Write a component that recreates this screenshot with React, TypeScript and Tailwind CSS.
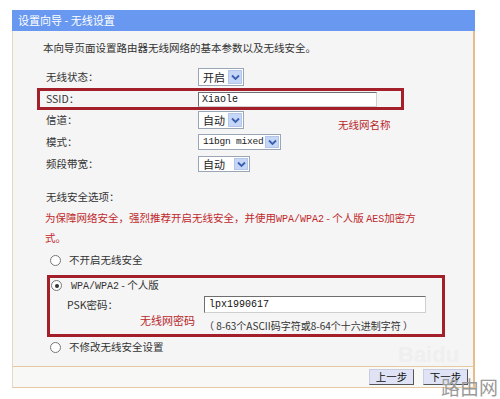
import React from 'react';

const cjk = "font-['SimSun','Noto_Sans_CJK_SC',sans-serif]";
const mono = "font-['Liberation_Mono',monospace]";

function Chevron() {
  return (
    <svg width="9" height="7" viewBox="0 0 9 7">
      <path d="M1 1.5 L4.5 5 L8 1.5" fill="none" stroke="#3a5fb0" strokeWidth="1.8" />
    </svg>
  );
}

function Select({ label, width, mono: isMono }: { label: string; width: number; mono?: boolean }) {
  return (
    <div
      className="flex h-full items-stretch border border-[#9aa6b6] bg-white"
      style={{ width }}>
      <span
        className={`flex-1 flex items-center pl-[4px] whitespace-nowrap overflow-hidden text-[#222] ${
          isMono ? `${mono} text-[9.5px] tracking-[-0.2px]` : `${cjk} text-[11px]`
        }`}>
        {label}
      </span>
      <span className="my-[1px] mr-[1px] w-[14px] shrink-0 flex items-center justify-center bg-[#c6d6f6] border border-[#b3c5ea]">
        <Chevron />
      </span>
    </div>
  );
}

function Radio({ checked }: { checked?: boolean }) {
  return (
    <span className="w-[11px] h-[11px] rounded-full border border-[#777] bg-white flex items-center justify-center">
      {checked && <span className="w-[4px] h-[4px] rounded-full bg-[#333]" />}
    </span>
  );
}

function Row({ label, children, className = '' }: { label: string; children?: React.ReactNode; className?: string }) {
  return (
    <div className={`flex items-center ${className}`}>
      <span className="w-[152px] text-[#333]">{label}</span>
      {children}
    </div>
  );
}

export default function App() {
  return (
    <div className={`relative w-[500px] h-[399px] bg-white overflow-hidden ${cjk} text-[10.5px]`}>
      <div className="ml-[12px] pt-[10px] w-[463px]">
        <div className="h-[21px] bg-[#6898ef] flex items-center pl-[6px] text-white text-[11px]">
          设置向导 - 无线设置
        </div>

        <div className="h-[335px] bg-[#f5f5f5] border-l border-l-[#e6d9c4] border-r-2 border-r-[#e6bd8a] pl-[24px] flex flex-col">
          <div className="mt-[8px] h-[18px] pl-[6px] flex items-center text-[#333]">
            本向导页面设置路由器无线网络的基本参数以及无线安全。
          </div>

          <Row label="无线状态：" className="mt-[11px] h-[18px] pl-[9px]">
            <div className="h-[18px]">
              <Select label="开启" width={46} />
            </div>
          </Row>

          <div className="mt-[2px] h-[22px] w-[367px] border-[3px] border-[#a3202b] pl-[6px] flex items-center">
            <span className="w-[152px] text-[#333]">SSID：</span>
            <div className="h-[15px] w-[179px] bg-white border border-[#6e6e6e] border-r-[#cfcfcf] border-b-[#cfcfcf] flex items-center pl-[3px]">
              <span className={`${mono} text-[10px] text-[#111]`}>Xiaole</span>
            </div>
          </div>

          <Row label="信道：" className="mt-[1px] h-[18px] pl-[9px]">
            <div className="h-[18px]">
              <Select label="自动" width={46} />
            </div>
            <span className="ml-[94px] mt-[9px] text-[#b8282c] text-[10.5px]">无线网名称</span>
          </Row>

          <Row label="模式：" className="mt-[5px] h-[16px] pl-[9px]">
            <div className="h-[16px]">
              <Select label="11bgn mixed" width={83} mono />
            </div>
          </Row>

          <Row label="频段带宽：" className="mt-[6px] h-[16px] pl-[9px]">
            <div className="h-[16px]">
              <Select label="自动" width={52} />
            </div>
          </Row>

          <div className="mt-[16px] h-[18px] pl-[9px] flex items-center text-[#333]">无线安全选项：</div>

          <div className="mt-[3px] pl-[8px] leading-[18px] text-[#c0292c]">
            为保障网络安全，强烈推荐开启无线安全，并使用<span className={`${mono} text-[10px]`}>WPA/WPA2</span> - 个人版 <span className={`${mono} text-[10px]`}>AES</span>加密方
            <br />
            式。
          </div>

          <div className="mt-[4px] h-[18px] pl-[13px] flex items-center gap-[8px] text-[#333]">
            <Radio />
            <span>不开启无线安全</span>
          </div>

          <div className="mt-[6px] ml-[10px] h-[62px] w-[398px] border-[3px] border-[#a3202b] flex flex-col">
            <div className="mt-[1px] h-[13px] pl-[1px] flex items-center gap-[9px] text-[#333]">
              <Radio checked />
              <span>
                <span className={`${mono} text-[10px]`}>WPA/WPA2</span> - 个人版
              </span>
            </div>
            <div className="mt-[4px] h-[17px] flex items-center">
              <span className="w-[154px] pl-[17px] text-[#333]">PSK密码：</span>
              <div className="h-[17px] w-[222px] bg-white border border-[#6e6e6e] border-r-[#cfcfcf] border-b-[#cfcfcf] flex items-center pl-[4px]">
                <span className={`${mono} text-[10px] text-[#111]`}>lpx1990617</span>
              </div>
            </div>
            <div className="flex items-start h-[20px]">
              <span className="w-[154px] pl-[90px] text-[#b8282c] text-[11px] leading-[14px]">无线网密码</span>
              <span className="pt-[5px] text-[#333] text-[10px] whitespace-nowrap">（ 8-63个ASCII码字符或8-64个十六进制字符 ）</span>
            </div>
          </div>

          <div className="mt-[1px] h-[18px] pl-[13px] flex items-center gap-[8px] text-[#333]">
            <Radio />
            <span>不修改无线安全设置</span>
          </div>
        </div>

        <div className="h-[22px] bg-[#f8f8f6] border-t border-t-[#e6c9a0] border-b border-b-[#e6c9a0] border-l border-l-[#e6d9c4] border-r-2 border-r-[#e6bd8a] flex items-center justify-end pr-[5px] gap-[9px]">
          <button className="h-[16px] w-[45px] bg-[#dfe3f5] border border-[#c8cde0] border-r-[#555] border-b-[#555] text-[10.5px] text-[#111] flex items-center justify-center">
            上一步
          </button>
          <button className="h-[16px] w-[45px] bg-[#dfe3f5] border border-[#c8cde0] border-r-[#555] border-b-[#555] text-[10.5px] text-[#111] flex items-center justify-center">
            下一步
          </button>
        </div>
      </div>

      <span className="absolute left-[398px] top-[338px] text-[22px] font-['Liberation_Sans',sans-serif] font-bold text-[#ececec] opacity-60">
        Baidu
      </span>
      <span className="absolute left-[441px] top-[377px] text-[19px] text-[#9a9a9a] leading-[20px]">
        路由网
      </span>
    </div>
  );
}
